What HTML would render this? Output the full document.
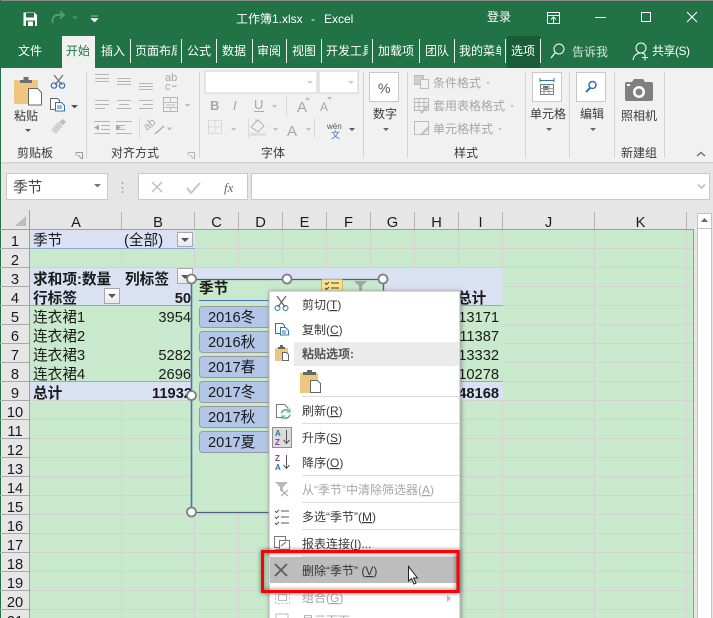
<!DOCTYPE html>
<html><head><meta charset="utf-8"><style>
html,body{margin:0;padding:0;background:#f1f1f1;width:713px;height:618px;overflow:hidden}
svg{display:block;position:absolute;left:0;top:0}
text{font-family:"Liberation Sans","Noto Sans CJK SC",sans-serif;font-size:12px;fill:#3a3a3a}
.w text,text.w{fill:#fff}
.g text{fill:#a6a6a6}
.l{font-size:14.67px;fill:#1a1a1a}
.c text{font-size:14.67px;fill:#1a1a1a}
.b{font-weight:bold}
.u{text-decoration:underline}
</style></head><body>
<svg width="713" height="618" viewBox="0 0 713 618" xmlns="http://www.w3.org/2000/svg">
<defs>
<filter id="sh" x="-10%" y="-10%" width="120%" height="120%"><feDropShadow dx="1" dy="1" stdDeviation="2.5" flood-color="#000" flood-opacity=".35"/></filter>
<filter id="rs" x="-10%" y="-30%" width="120%" height="160%"><feDropShadow dx="0" dy="0" stdDeviation="2.5" flood-color="#000" flood-opacity=".6"/></filter>
<linearGradient id="tb" x1="0" y1="0" x2="0" y2="1"><stop offset="0" stop-color="#fff"/><stop offset="1" stop-color="#e8e8e8"/></linearGradient>
</defs>
<!-- chrome -->
<rect width="713" height="618" fill="#e6e6e6"/>
<rect width="713" height="68" fill="#217346"/>
<rect width="713" height="1" fill="#8a8a8a"/>
<rect x="0" y="68" width="713" height="94" fill="#f1f1f1"/>
<rect x="0" y="162" width="713" height="1.5" fill="#d2d2d2"/>
<rect x="0" y="0" width="1" height="618" fill="#217346"/>
<!-- title bar icons -->
<path d="M23.5 12.5h11l2.500 2.500v11h-13.500z" fill="#fff"/><rect x="26" y="13" width="8" height="4.500" fill="#217346"/><rect x="26" y="20.500" width="9" height="5.500" fill="#217346"/><rect x="28" y="21.500" width="5" height="4.500" fill="#fff"/>
<path d="M53 23c-2-5 2-9 7-8h4M60 11.500l4 3.500-4 3.500" fill="none" stroke="#5b9b78" stroke-width="1.800"/>
<path d="M72 16.500h6l-3 3z" fill="#4b8f6b"/>
<path d="M91 16h7M91 18.500h7l-3.500 3.500z" fill="#fff" stroke="#fff" stroke-width=".6"/>
<g class="w">
<text x="236" y="23">工作簿1.xlsx</text><text x="311" y="23">-</text><text x="324" y="23">Excel</text>
<text x="487" y="21">登录</text>
<text x="18" y="55">文件</text><text x="101" y="55">插入</text>
<svg x="135" y="40" width="42" height="22"><text x="0" y="15">页面布局</text></svg>
<text x="187" y="55">公式</text><text x="222" y="55">数据</text><text x="257" y="55">审阅</text><text x="292" y="55">视图</text>
<svg x="326" y="40" width="42" height="22"><text x="0" y="15">开发工具</text></svg>
<text x="378" y="55">加载项</text><text x="425" y="55">团队</text>
<svg x="459" y="40" width="42" height="22"><text x="0" y="15">我的菜单</text></svg>
<text x="652" y="55" textLength="38">共享(S)</text>
</g>
<path d="M547.500 12.500h12v11h-12zM547.500 15.500h12M553.500 23v-5.500M551 19.500l2.500-2.500 2.500 2.500" fill="none" stroke="#fff"/>
<rect x="595" y="17" width="11" height="1" fill="#fff"/>
<rect x="641.500" y="12.500" width="9" height="9" fill="none" stroke="#fff"/>
<path d="M687 12l10 10M697 12l-10 10" stroke="#fff" stroke-width="1.100"/>
<!-- tabs -->
<rect x="62" y="36" width="33" height="32" fill="#f1f1f1"/><text x="66" y="55" style="fill:#217346">开始</text>
<rect x="507" y="36" width="33" height="32" fill="#1b5c38"/><text x="511" y="55" style="fill:#fff">选项</text>
<path d="M130.500 39v24M181.500 39v24M216.500 39v24M252.500 39v24M286.500 39v24M321.500 39v24M372.500 39v24M419.500 39v24M454.500 39v24M505.500 39v24M540.500 39v24" stroke="#e8efe9" fill="none"/>
<circle cx="559" cy="49" r="5" fill="none" stroke="#fff"/><path d="M555 53l-4 5" stroke="#fff" stroke-width="1.200"/>
<text x="572" y="56" style="fill:#d3e3d9">告诉我</text>
<circle cx="641" cy="48" r="5" fill="none" stroke="#fff"/><path d="M633 60c1-5 4-7 8-7 2 0 3 .5 4 1.500M642 57.500h6M645 54.500v6" fill="none" stroke="#fff"/>
<!-- ribbon separators -->
<path d="M86.500 72v86M199.500 72v86M363.500 72v86M407.500 72v86M525.500 72v86M569.500 72v86M614.500 72v86M664.500 72v86" stroke="#d4d4d4"/>
<path d="M286.500 96v20M248.500 118v20M314.500 118v20M139.500 118v20" stroke="#d8d8d8"/>
<!-- clipboard -->
<rect x="14" y="80" width="24" height="24" rx="1.500" fill="#eec67e"/>
<path d="M20 83v-3h3.500v-3h5v3h3.500v3z" fill="#6f6f6f"/>
<path d="M28.500 88.500h9l4 4v12.500h-13z" fill="#fff" stroke="#666"/>
<text x="14" y="120">粘贴</text>
<path d="M25 129h6l-3 3z" fill="#5a5a5a"/>
<path d="M54 75l8 10M63 75l-8 10" stroke="#777" stroke-width="1.400"/>
<circle cx="54" cy="85.500" r="2.700" fill="none" stroke="#2f74b5" stroke-width="1.200"/><circle cx="62" cy="85.500" r="2.700" fill="none" stroke="#2f74b5" stroke-width="1.200"/>
<path d="M50.500 98.500h7l2 2v9h-9z" fill="#fff" stroke="#666"/><path d="M55.500 102.500h6l3 3v5.500h-9z" fill="#fff" stroke="#2f74b5"/><path d="M57 106h5M57 108h5" stroke="#2f74b5"/>
<path d="M71 105h7l-3.500 3.500z" fill="#555"/>
<path d="M51 130l7-8 5 4-7 8z" fill="#d2d2d2"/><path d="M59 122l4-3 3 3-3 3z" fill="#bdbdbd"/>
<text x="17" y="157">剪贴板</text>
<path d="M76 152.500h6.500v6.500M76 152.500v3M78 155l4 4" fill="none" stroke="#9a9a9a"/>
<!-- align icons -->
<path d="M95 74.500h14M95 78.500h14M95 81.500h14M117 78.500h14M117 81.500h14M117 84.500h14M139 83.500h14M139 86.500h14M139 89.500h14M95 100.500h14M95 104.500h14M95 108.500h10M117 100.500h14M119 104.500h10M117 108.500h14M139 100.500h14M143 104.500h10M139 108.500h14M94 121.500h16M101 125.500h9M101 129.500h9M94 133.500h16M116 121.500h16M116 125.500h9M116 129.500h9M116 133.500h16" stroke="#b5b5b5" fill="none"/>
<path d="M94 127.500l5-3v6zM121 127.500l-5-3v6z" fill="#aaa"/>
<rect x="163.500" y="97.500" width="14" height="14" fill="none" stroke="#b5b5b5"/><path d="M163 102.500h15M163 107.500h15M166 105h9M170.500 97v5M170.500 108v3" stroke="#c0c0c0" fill="none"/>
<path d="M185 104h5l-2.500 3z" fill="#bbb"/><path d="M167 127.500h5l-2.500 3z" fill="#bbb"/>
<text x="165" y="81" style="fill:#aaa;font-size:11px">ab</text><text x="165" y="90" style="fill:#aaa;font-size:11px">c</text><path d="M172 86.500h4v-2M172 86.500l2-1.500" stroke="#bbb" fill="none"/>
<path d="M155 134l9-8" stroke="#aaa" stroke-width="1.300" fill="none"/><text x="147" y="131" transform="rotate(-40 147 131)" style="fill:#aaa;font-size:11px">ab</text>
<text x="111" y="157">对齐方式</text>
<path d="M188 152.500h6.500v6.500M188 152.500v3M190 155l4 4" fill="none" stroke="#b5b5b5"/>
<!-- font -->
<rect x="205" y="71" width="112" height="22" fill="#fff" stroke="#d0d0d0"/><rect x="319" y="71" width="39" height="22" fill="#fff" stroke="#d0d0d0"/>
<path d="M307 81h6l-3 3zM348 81h6l-3 3z" fill="#cfcfcf"/>
<g class="g"><text x="210" y="110" class="b" style="font-size:13px">B</text><text x="233" y="110" style="font-size:13px;font-style:italic">I</text><text x="254" y="109" style="font-size:13px">U</text></g>
<rect x="254" y="111" width="10" height="1" fill="#aaa"/>
<path d="M272 105h5l-2.500 3zM231 128h5l-2.500 3zM273 128h5l-2.500 3zM306 128h5l-2.500 3z" fill="#c0c0c0"/>
<g class="g"><text x="297" y="112" style="font-size:15px">A</text><text x="320" y="111" style="font-size:12px">A</text><text x="287" y="136" style="font-size:15px">A</text></g>
<path d="M305 100l2.500-3 2.500 3zM327 97h5l-2.500 3z" fill="#bbb"/>
<rect x="208.500" y="120.500" width="13" height="13" fill="none" stroke="#c5c5c5" stroke-dasharray="1 1"/><path d="M215 121v12M208 127h13" stroke="#ccc" stroke-dasharray="1 1"/>
<path d="M251 127l7-7 6 6-6 6zM256 122v-3" fill="none" stroke="#b5b5b5"/><rect x="250" y="133" width="16" height="3" fill="#e0e0e0"/>
<text x="327" y="129" style="font-size:8px;fill:#555">wén</text><text x="331" y="138" style="font-size:9px;fill:#2f74b5">文</text><path d="M349 128h6l-3 3z" fill="#555"/>
<text x="261" y="157">字体</text>
<!-- number -->
<rect x="369.500" y="72.500" width="29" height="29" fill="#fff" stroke="#c8c8c8"/><text x="378" y="93" style="font-size:14px;fill:#555">%</text>
<text x="373" y="118">数字</text><path d="M383 128h6l-3 3z" fill="#666"/>
<!-- styles -->
<g fill="none" stroke="#bbb"><rect x="414.500" y="75.500" width="9" height="9" fill="#d0d0d0"/><rect x="420.500" y="79.500" width="8" height="9" fill="#f1f1f1"/>
<rect x="414.500" y="98.500" width="14" height="12"/><path d="M414 102.500h14M414 106.500h14M419 98v12M424 98v12"/><path d="M421 113l8-8" stroke-width="2.500" stroke="#c2c2c2"/>
<rect x="414.500" y="121.500" width="14" height="13"/><path d="M421 135l8-8" stroke-width="2.500" stroke="#c2c2c2"/></g>
<g class="g"><text x="433" y="87">条件格式</text><text x="433" y="110">套用表格格式</text><text x="433" y="133">单元格样式</text></g>
<path d="M486 82h4l-2 2.500zM510 105h4l-2 2.500zM498 128h4l-2 2.500z" fill="#c5c5c5"/>
<text x="454" y="157">样式</text>
<!-- cells etc -->
<rect x="532.500" y="72.500" width="29" height="29" fill="#fff" stroke="#c8c8c8"/>
<path d="M540 80.500h14M540 78v4M554 78v4" stroke="#2f74b5" fill="none"/><rect x="540.500" y="84.500" width="13" height="10" fill="#fff" stroke="#777"/><rect x="543" y="86" width="5" height="4" fill="#2f74b5"/><path d="M540 88.500h14M540 91.500h14M544 85v10M549 85v10" stroke="#999"/>
<text x="530" y="118">单元格</text><path d="M546 128h6l-3 3z" fill="#666"/>
<rect x="576.500" y="72.500" width="29" height="29" fill="#fff" stroke="#c8c8c8"/>
<circle cx="592.500" cy="85" r="3.500" fill="none" stroke="#2f74b5" stroke-width="1.500"/><path d="M590 88l-4 4" stroke="#2f74b5" stroke-width="2"/>
<text x="580" y="118">编辑</text><path d="M590 128h6l-3 3z" fill="#666"/>
<path d="M625 84q0-2 2-2h5l2-3h9l2 3h6q2 0 2 2v15q0 2-2 2h-24q-2 0-2-2z" fill="#808080"/><circle cx="639" cy="92" r="6" fill="#fff"/><circle cx="639" cy="92" r="3.500" fill="#808080"/><rect x="627" y="84" width="3" height="2" fill="#fff"/>
<text x="621" y="120">照相机</text><text x="621" y="157">新建组</text>
<path d="M697 156l4-3.500 4 3.500" fill="none" stroke="#666" stroke-width="1.300"/>
<!-- formula bar -->
<rect x="6.500" y="173.500" width="101" height="26" fill="#fff" stroke="#c9c9c9"/>
<text x="13" y="192" class="l" style="fill:#444">季节</text>
<path d="M94 184h7l-3.500 3.500z" fill="#777"/>
<path d="M122.500 182v2M122.500 187v2M122.500 191v2" stroke="#aaa" stroke-width="1.500"/>
<rect x="138.500" y="173.500" width="109" height="26" fill="#fff" stroke="#c9c9c9"/><rect x="251.500" y="173.500" width="458" height="26" fill="#fff" stroke="#c9c9c9"/>
<path d="M152 182l10 10M162 182l-10 10" stroke="#c6c6c6" stroke-width="1.600"/>
<path d="M187 188l4 5 9-10" fill="none" stroke="#c6c6c6" stroke-width="2"/>
<text x="224" y="192" style="font-family:'Liberation Serif',serif;font-style:italic;font-size:13px;fill:#666">fx</text>
<path d="M698 184.500l3.500 3.500 3.500-3.500" fill="none" stroke="#c0c0c0" stroke-width="1.600"/>
<!-- sheet -->
<rect x="0" y="210" width="713" height="408" fill="#e6e6e6"/>
<rect x="0" y="0" width="1" height="618" fill="#217346"/>
<rect x="30" y="230" width="663" height="388" fill="#c8e9cc"/>
<path d="M693.500 229v389" stroke="#9a9a9a"/>
<path d="M30 248.500H693M30 267.500H693M30 286.500H693M30 305.500H693M30 324.500H693M30 343.500H693M30 362.500H693M30 381.500H693M30 400.500H693M30 419.500H693M30 438.500H693M30 457.500H693M30 476.500H693M30 495.500H693M30 514.500H693M30 533.500H693M30 552.500H693M30 571.500H693M30 590.500H693M30 609.500H693" stroke="#d2d2d2"/>
<path d="M121.500 230v388M194.500 230v388M238.500 230v388M282.500 230v388M326.500 230v388M370.500 230v388M414.500 230v388M458.500 230v388M502.500 230v388M594.500 230v388M686.500 230v388" stroke="#d2d2d2"/>
<!-- headers -->
<path d="M0 248.500H30M0 267.500H30M0 286.500H30M0 305.500H30M0 324.500H30M0 343.500H30M0 362.500H30M0 381.500H30M0 400.500H30M0 419.500H30M0 438.500H30M0 457.500H30M0 476.500H30M0 495.500H30M0 514.500H30M0 533.500H30M0 552.500H30M0 571.500H30M0 590.500H30M0 609.500H30" stroke="#a8a8a8"/>
<path d="M121.500 212v17M194.500 212v17M238.500 212v17M282.500 212v17M326.500 212v17M370.500 212v17M414.500 212v17M458.500 212v17M502.500 212v17M594.500 212v17M686.500 212v17" stroke="#b5b5b5"/>
<path d="M0 229.500H693M29.500 210V618" stroke="#9e9e9e"/>
<path d="M26 216v10H15z" fill="#bcbcbc"/>
<g class="c" text-anchor="middle">
<text x="76" y="227">A</text><text x="158" y="227">B</text><text x="216.500" y="227">C</text><text x="260.500" y="227">D</text><text x="304.500" y="227">E</text><text x="348.500" y="227">F</text><text x="392.500" y="227">G</text><text x="436.500" y="227">H</text><text x="480.500" y="227">I</text><text x="548.500" y="227">J</text><text x="640.500" y="227">K</text>
<text x="15" y="246">1</text><text x="15" y="265">2</text><text x="15" y="284">3</text><text x="15" y="303">4</text><text x="15" y="322">5</text><text x="15" y="341">6</text><text x="15" y="360">7</text><text x="15" y="379">8</text><text x="15" y="398">9</text><text x="15" y="417">10</text><text x="15" y="436">11</text><text x="15" y="455">12</text><text x="15" y="474">13</text><text x="15" y="493">14</text><text x="15" y="512">15</text><text x="15" y="531">16</text><text x="15" y="550">17</text><text x="15" y="569">18</text><text x="15" y="588">19</text><text x="15" y="607">20</text><text x="15" y="626">21</text>
</g>
<!-- scrollbar -->
<rect x="697.500" y="213.500" width="14" height="405" fill="#fff" stroke="#c4c4c4"/><path d="M697 228.500h15" stroke="#c4c4c4"/><path d="M701 222l3.500-4 3.500 4z" fill="#666"/>
<!-- pivot -->
<rect x="30" y="230" width="165" height="18" fill="#d9e1f2"/><path d="M30 248.500H195" stroke="#8ea9db"/>
<rect x="30" y="268" width="473" height="37" fill="#d9e1f2"/>
<rect x="30" y="306" width="473" height="75" fill="#c8e9cc"/>
<path d="M30 305.500H503M30 381.500H503" stroke="#8ea9db"/>
<rect x="30" y="382" width="473" height="18" fill="#d9e1f2"/>
<g>
<text x="33" y="245" class="l">季节</text><text x="124" y="245" class="l">(全部)</text>
<text x="33" y="284" class="l b">求和项:数量</text><text x="125" y="284" class="l b">列标签</text>
<text x="33" y="303" class="l b">行标签</text><text x="191" y="303" class="l b" text-anchor="end">50</text>
<text x="33" y="322" class="l">连衣裙1</text><text x="33" y="341" class="l">连衣裙2</text><text x="33" y="360" class="l">连衣裙3</text><text x="33" y="379" class="l">连衣裙4</text>
<text x="33" y="398" class="l b">总计</text>
<text x="191" y="322" class="l" text-anchor="end">3954</text><text x="191" y="360" class="l" text-anchor="end">5282</text><text x="191" y="379" class="l" text-anchor="end">2696</text><text x="192" y="398" class="l b" text-anchor="end">11932</text>
<text x="499" y="322" class="l" text-anchor="end">13171</text><text x="499" y="341" class="l" text-anchor="end">11387</text><text x="499" y="360" class="l" text-anchor="end">13332</text><text x="499" y="379" class="l" text-anchor="end">10278</text><text x="499" y="398" class="l b" text-anchor="end">48168</text>
<text x="457" y="303" class="l b">总计</text>
</g>
<g fill="url(#tb)" stroke="#a8a8a8"><rect x="177.500" y="232.500" width="15" height="14"/><rect x="177.500" y="268.500" width="15" height="15"/><rect x="104.500" y="288.500" width="15" height="15"/></g>
<path d="M181 238h8l-4 4zM181 275h8l-4 4zM108 294h8l-4 4z" fill="#555"/>
<!-- slicer -->
<rect x="191" y="279" width="192" height="233" fill="#c8e9cc"/>
<path d="M191.500 279.500H383.500V512.500H191.500z" fill="none" stroke="#46637e" stroke-width="1.300"/>
<path d="M191.500 279.500V512.500" stroke="#4472c4" stroke-width="1.400"/>
<text x="199" y="293" class="l b">季节</text>
<path d="M199 300.500H383" stroke="#4472c4"/>
<rect x="321.500" y="279.500" width="21" height="12" rx="1" fill="#fde28a" stroke="#d6b656"/>
<path d="M325 283l1.500 1.500 2.500-2.500M325 288l1.500 1.500 2.500-2.500M331 283h8M331 288h8" stroke="#444" fill="none"/>
<path d="M354 281h13l-5 5v5h-3v-5z" fill="#a3a3a3"/>
<g fill="#b4c6e7" stroke="#9a9a9a"><rect x="199.500" y="306.500" width="80" height="21" rx="3"/><rect x="199.500" y="331.500" width="80" height="21" rx="3"/><rect x="199.500" y="356.500" width="80" height="21" rx="3"/><rect x="199.500" y="381.500" width="80" height="21" rx="3"/><rect x="199.500" y="406.500" width="80" height="21" rx="3"/><rect x="199.500" y="431.500" width="80" height="21" rx="3"/></g>
<text x="208" y="322" class="l">2016冬</text><text x="208" y="347" class="l">2016秋</text><text x="208" y="372" class="l">2017春</text><text x="208" y="397" class="l">2017冬</text><text x="208" y="422" class="l">2017秋</text><text x="208" y="447" class="l">2017夏</text>
<g fill="#fff" stroke="#808080" stroke-width="1.800"><circle cx="191.500" cy="279" r="4.500"/><circle cx="287" cy="279" r="4.500"/><circle cx="383" cy="279" r="4.500"/><circle cx="191.500" cy="395.500" r="4.500"/><circle cx="191.500" cy="512" r="4.500"/></g>
<!-- context menu -->
<rect x="269" y="291" width="191" height="340" fill="#fff" stroke="#b5b5b5" filter="url(#sh)"/>
<rect x="294" y="342" width="165" height="24" fill="#ebebeb"/>
<path d="M302 396.500H459M302 423.500H459M302 475.500H459M302 502.500H459M302 529.500H459M302 556.500H459" stroke="#dcdcdc"/>
<g>
<text x="302" y="309">剪切(<tspan class="u">T</tspan>)</text>
<text x="302" y="334">复制(<tspan class="u">C</tspan>)</text>
<text x="302" y="358" class="b" style="fill:#555">粘贴选项:</text>
<text x="302" y="415">刷新(<tspan class="u">R</tspan>)</text>
<text x="302" y="442">升序(<tspan class="u">S</tspan>)</text>
<text x="302" y="467">降序(<tspan class="u">O</tspan>)</text>
<text x="302" y="521">多选“季节”(<tspan class="u">M</tspan>)</text>
<text x="302" y="548">报表连接(<tspan class="u">I</tspan>)...</text>
</g>
<text x="302" y="494" style="fill:#a6a6a6">从“季节”中清除筛选器(<tspan class="u">A</tspan>)</text>
<text x="302" y="602" style="fill:#a6a6a6">组合(<tspan class="u">G</tspan>)</text>
<text x="302" y="625" style="fill:#a6a6a6">显示页面</text>
<path d="M447 595l4 3.500-4 3.500z" fill="#bdbdbd"/>
<path d="M277 296l8 11M286 296l-8 11" stroke="#666" stroke-width="1.300"/><circle cx="277.500" cy="308" r="2.500" fill="none" stroke="#2f74b5"/><circle cx="285.500" cy="308" r="2.500" fill="none" stroke="#2f74b5"/>
<path d="M275.500 323.500h7l2 2v8h-9z" fill="#fff" stroke="#666"/><path d="M280.500 327.500h5l3 3v4.500h-8z" fill="#fff" stroke="#2f74b5"/><path d="M282 331h4M282 333h4" stroke="#2f74b5"/>
<rect x="275" y="348" width="13" height="13" fill="#eec67e"/><path d="M278 349v-2h2v-2h3v2h2v2z" fill="#666"/><path d="M282.500 352.500h4l2 2v6h-6z" fill="#fff" stroke="#666"/>
<rect x="300" y="373" width="18" height="20" fill="#eec67e"/><path d="M303 375v-3h4v-2h5v2h4v3z" fill="#666"/><path d="M310.500 380.500h7l3 3v9h-10z" fill="#fff" stroke="#666"/>
<path d="M283 417.500h-6.500v-13h8l3.500 3.500v1" fill="none" stroke="#777"/>
<path d="M281.500 413.500a4.500 4.500 0 0 1 7.500-2.500M290 414.500a4.500 4.500 0 0 1-7.500 2.500" fill="none" stroke="#4cae7e" stroke-width="1.500"/><path d="M290 408.500v3.500h-3.500M282 419.500v-3.500h3.500" fill="none" stroke="#4cae7e"/>
<rect x="272.500" y="427.500" width="19" height="20" fill="#dcdcdc" stroke="#8f8f8f"/>
<text x="275" y="436" style="font-size:8px;fill:#2f74b5" class="b">A</text><text x="275" y="445" style="font-size:8px;fill:#7b3fa0" class="b">Z</text><path d="M286.500 430v13M283.500 440l3 3.500 3-3.500" fill="none" stroke="#555"/>
<text x="275" y="461" style="font-size:8px;fill:#7b3fa0" class="b">Z</text><text x="275" y="470" style="font-size:8px;fill:#2f74b5" class="b">A</text><path d="M286.500 455v13M283.500 465l3 3.500 3-3.500" fill="none" stroke="#555"/>
<path d="M275 482h13l-5 5v4h-3v-4z" fill="#b8b8b8"/><path d="M281 490l7 6M288 490l-7 6" stroke="#b0b0b0" stroke-width="1.300"/>
<path d="M275 511l1.500 1.500 2.500-2.500M275 517l1.500 1.500 2.500-2.500M275 523l1.500 1.500 2.500-2.500M281 511h8M281 517h8M281 523h8" stroke="#555" fill="none"/>
<rect x="274.500" y="536.500" width="11" height="11" fill="#fff" stroke="#777"/><rect x="279.500" y="540.500" width="10" height="9" fill="#fff" stroke="#777"/><path d="M281 546l5-4" stroke="#2f74b5"/><path d="M275 550h5" stroke="#4cae7e" stroke-width="1.500"/>
<rect x="275.500" y="591.500" width="14" height="12" fill="none" stroke="#bdbdbd" stroke-dasharray="2 2"/><rect x="278.500" y="594.500" width="8" height="6" fill="none" stroke="#bbb"/>
<rect x="276" y="614" width="12" height="6" fill="none" stroke="#bdbdbd"/>
<!-- highlight -->
<rect x="270" y="557" width="188" height="26" fill="#bdbdbd"/>
<path d="M275 564l12 12M287 564l-12 12" stroke="#606060" stroke-width="1.900"/>
<text x="302" y="575" style="fill:#333">删除“季节” (<tspan class="u">V</tspan>)</text>
<rect x="262.500" y="551.500" width="195.500" height="40" fill="none" stroke="#f00" stroke-width="3" filter="url(#rs)"/>
<rect x="262.500" y="551.500" width="195.500" height="40" fill="none" stroke="#f00" stroke-width="3"/>
<path d="M408.500 566.500V581l3-2.500 2.500 5.500 2-1-2.500-5 4 0z" fill="#fff" stroke="#222"/>
</svg>
</body></html>
